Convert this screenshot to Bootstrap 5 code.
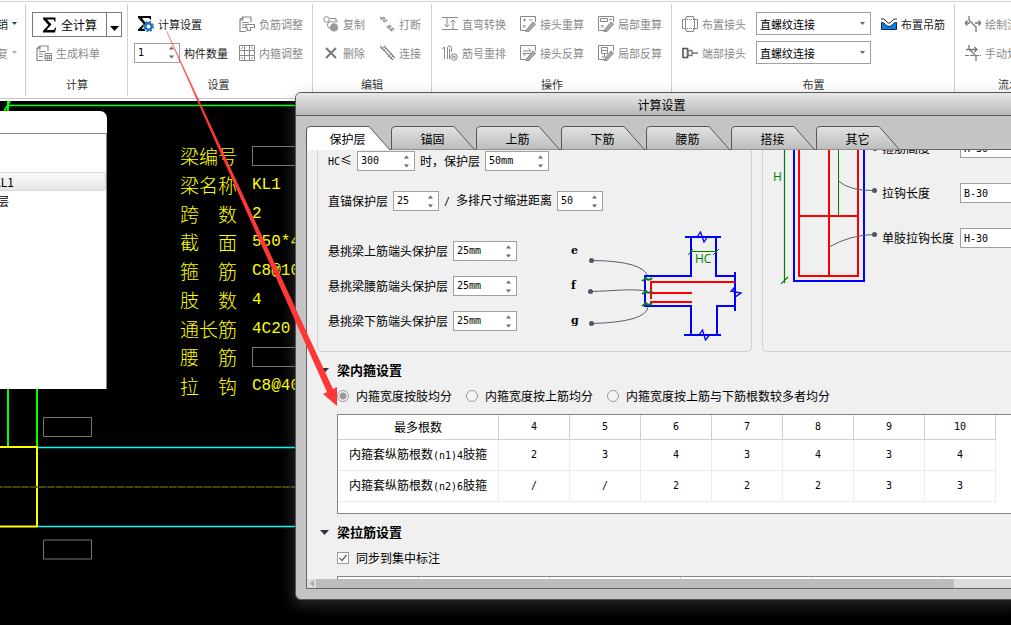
<!DOCTYPE html>
<html lang="zh-CN">
<head>
<meta charset="utf-8">
<meta name="viewport" content="width=device-width, initial-scale=1">
<title>计算设置</title>
<link href="https://cdn.jsdelivr.net/npm/bootstrap@5.3.0/dist/css/bootstrap.min.css" rel="stylesheet">
<script src="https://cdn.jsdelivr.net/npm/bootstrap@5.3.0/dist/js/bootstrap.bundle.min.js"></script>
<style>
  body { background: #000; color: #000; font-family: "Noto Sans CJK SC", sans-serif; font-size: 12px; line-height: 16px; }
  button, input, select { font-family: inherit; }
  svg { display: block; flex: none; }
  .mono { font-family: "DejaVu Sans Mono", monospace; font-size: 10px; }

  /* ribbon */
  .ribbon { background: #fff; border-bottom: 1px solid #c8c8c8; box-shadow: inset 0 1px #fff, inset 0 2px #d0d0d0, 0 2px #fff; font-size: 11px; height: 99px; padding-top: 4px; position: relative; z-index: 1; }
  .ribbon-group { flex: none; border-right: 1px solid #d0d0d0; padding: 5px 9px 0 10px; height: 92px; overflow: hidden; }
  .ribbon-label { color: #333; padding-top: 9px; text-align: center; }
  .ribbon-tight { padding-left: 6px; }
  .ribbon-calc { padding: 5px 5px 0 6px; }
  .ribbon-edit { padding-right: 10px; }
  .ribbon-last { width: 118px; border-right: 0; }
  .cols { display: flex; gap: 14px; }
  .cols-edit { gap: 15px; }
  .cols-set { gap: 11px; }
  .cols-place { gap: 10px; }
  .tool { height: 29px; display: flex; align-items: center; gap: 4px; background: none; border: 0; padding: 0; white-space: nowrap; color: #222; }
  .tool.off { color: #8a8a8a; }
  .tool-cut { width: 26px; padding: 5px 8px 0 0; overflow: hidden; }
  .split-btn { border: 1px solid #7a7a7a; height: 25px; width: 90px; margin: 3px 0 1px; }
  .split-btn button { background: #fff; border: 0; padding: 0; font-size: 12px; }
  .split-btn button + button { border-left: 1px solid #7a7a7a; width: 15px; }
  .pick { appearance: none; width: 115px; height: 23px; margin: 3px 0; padding: 0 18px 0 3px; font-size: 11px; line-height: 16px; border: 1px solid #a0a0a0; border-radius: 0; color: #000; background: #fff url("data:image/svg+xml,%3Csvg xmlns='http://www.w3.org/2000/svg' viewBox='0 0 5 3'%3E%3Cpath d='M0 0h5L2.500 3z' fill='%23666'/%3E%3C/svg%3E") no-repeat right 5px center / 5px 3px; }

  /* spin boxes and plain fields */
  .spin { display: flex; align-items: center; height: 20px; border: 1px solid #a0a0a0; background: #fff; padding-right: 5px; }
  .spin input, .plain { border: 0; padding: 0 0 0 3px; min-width: 0; width: 100%; background: none; font-family: "DejaVu Sans Mono", monospace; font-size: 10px; line-height: 16px; color: #000; outline: 0; }
  .plain { border: 1px solid #a0a0a0; background: #fff; height: 20px; }
  .w-s { width: 46px; } .w-m { width: 58px; } .w-l { width: 64px; }

  /* drawing area */
  .cad { position: relative; min-height: 0; }
  .cad-lines { position: absolute; inset: 0; width: 100%; height: 100%; }
  .cad-props { position: absolute; left: 180px; top: 43px; height: 258px; color: #ff0; font-size: 19px; line-height: 28px; font-weight: 300; }
  .cad-props dt { width: 57px; font-weight: 300; }
  .cad-props dd { margin: 0 0 0 15px; font-family: "Liberation Mono", monospace; font-size: 16px; font-weight: 400; white-space: nowrap; }
  .cad-props .cad-blank { border: 1px solid #777; width: 49px; height: 20px; }
  .side-list { position: absolute; left: 0; top: 12px; width: 107px; height: 278px; background: #fff; border-top-right-radius: 7px; padding-top: 22px; }
  .side-list ul { border-top: 1px solid #7f868e; border-right: 1px solid #7f868e; height: 100%; padding: 38px 0 0; }
  .side-list li { height: 19px; line-height: 17px; border: 1px solid transparent; border-left: 0; white-space: nowrap; display: flex; }
  .side-list li span { width: 14px; display: flex; justify-content: flex-end; flex: none; }
  .side-list li + li span { width: 9px; }
  .side-list .picked { border-color: #d9d9d9; border-radius: 0 3px 3px 0; background: linear-gradient(#fafafa, #e6e6e6); }

  /* dialog */
  .dlg { position: absolute; z-index: 2; left: 295px; top: 92px; right: -17px; bottom: 25px; background: #c4c4c4; border: 1px solid #585858; border-radius: 6px; box-shadow: 0 4px 14px 2px rgba(130,130,130,.3); }
  .dlg-title { height: 23px; border-bottom: 1px solid #585858; border-radius: 5px 5px 0 0; background: linear-gradient(#e8e8e8, #b8b8b8); text-align: center; line-height: 23px; }
  .dlg-main { margin: 10px; min-height: 0; }
  .dlg-tabs { height: 24px; position: relative; z-index: 1; margin-bottom: -1px; }
  .dlg-tab { position: relative; width: 85px; height: 24px; flex: none; background: none; border: 0; padding: 0 2px 0 0; line-height: 25px; color: #000; }
  .dlg-tab svg { position: absolute; left: 0; top: 0; z-index: -1; }
  .pane { background: #f0f0f0; border: 1px solid #666; min-height: 0; overflow: hidden; }
  .pane-body { padding-left: 10px; min-height: 0; overflow: hidden; }
  .boxes { gap: 10px; }
  .box { border: 1px solid #d0d0d0; border-top: 0; border-radius: 0 0 5px 5px; flex: none; white-space: nowrap; }
  .cover { padding: 1px 3px 10px 10px; }
  .cover-labels { width: 17px; font-family: "DejaVu Serif", serif; font-weight: 700; font-size: 11px; line-height: 20px; }
  .cover-fields { width: 243px; }
  .stack { display: grid; gap: 15px; }
  .pair { display: flex; align-items: center; gap: 5px; height: 20px; }
  .pair-line { margin-bottom: 20px; }
  .stirrup { padding-left: 7px; }
  .hooks { display: flex; flex-direction: column; gap: 25px; margin-top: -12px; }
  .hooks label { width: 78px; }
  .sec { height: 20px; margin-top: 8px; padding-left: 3px; font-size: 13px; font-weight: 700; line-height: 20px; gap: 8px; }
  .opts { display: flex; align-items: center; gap: 14px; height: 20px; margin: 6px 0 8px 20px; white-space: nowrap; }
  .opts label { display: flex; align-items: center; gap: 7px; }
  .opts input { appearance: none; width: 12px; height: 12px; margin: 0; border: 1px solid #9a9a9a; flex: none; }
  .opts input[type=radio] { border-radius: 50%; background: #f4f4f4; }
  .opts input[type=radio]:checked { background: radial-gradient(#999 3px, #f4f4f4 4px); }
  .opts input[type=checkbox] { background: #fff url("data:image/svg+xml,%3Csvg xmlns='http://www.w3.org/2000/svg' viewBox='0 0 10 10'%3E%3Cpath d='M1.500 5l2.500 2.500L8.500 2' fill='none' stroke='%23666' stroke-width='1.300'/%3E%3C/svg%3E"); }
  .grid-box { margin-left: 20px; border: 1px solid #7f868e; border-right: 0; background: #fff; height: 100px; overflow: hidden; }
  .grid-box table { table-layout: fixed; width: 658px; text-align: center; border-collapse: separate; border-spacing: 0; }
  .grid-box th { font-weight: 400; height: 25px; border-right: 1px solid #d0d0d0; border-bottom: 1px solid #d0d0d0; padding: 0; }
  .grid-box td { height: 31px; border-right: 1px solid #ececec; border-bottom: 1px solid #ececec; padding: 0; }
  .grid-box .num { font-family: "DejaVu Sans Mono", monospace; font-size: 10px; }
  .grid-box .wide-grid { width: 605px; }
  .c-name { width: 161px; } .c-num { width: 71px; }
  .c-first { width: 81px; } .c-wide { width: 131px; }
  .hbar { height: 9px; background: #dcdcdc; flex: none; }
  .hbar-thumb { background: #bdbdbd; width: 638px; }
  .pointer { position: absolute; left: 0; top: 0; z-index: 3; pointer-events: none; }
</style>
</head>
<body class="vh-100 overflow-hidden position-relative d-flex flex-column">

<svg width="0" height="0" class="position-absolute" aria-hidden="true">
  <defs>
    <linearGradient id="tabFill" x2="0" y2="1"><stop offset="0" stop-color="#e2e2e2"/><stop offset="1" stop-color="#bcbcbc"/></linearGradient>
    <linearGradient id="fade" x1="166" y1="31" x2="205" y2="115" gradientUnits="userSpaceOnUse"><stop offset="0" stop-color="#ff3737" stop-opacity=".6"/><stop offset="1" stop-color="#ff3737"/></linearGradient>
    <symbol id="tab" viewBox="0 0 85 24"><path d="M.5 23.500V4Q.5.5 4 .5H63L83.500 23.500" fill="url(#tabFill)" stroke="#585858"/></symbol>
    <symbol id="tabOn" viewBox="0 0 85 24"><path d="M.5 24V4Q.5.5 4 .5H63L84 24" fill="#fff" stroke="#585858"/></symbol>
    <symbol id="updown" viewBox="0 0 5 13"><path d="M0 3.500L2.500.5 5 3.500zM0 9.500L2.500 12.500 5 9.500z" fill="#666"/></symbol>
    <symbol id="pen" viewBox="0 0 16 16"><path d="M6 14.500L13 6l2.500 2L9 15.500l-3 .5z" fill="#aaa" stroke="#777" stroke-width=".8"/></symbol>
    <symbol id="sheet" viewBox="0 0 16 16"><path d="M7 15.500H1V3.500L4 1h8v5M4 1v3H1M3 6.500h7M3 9h4M3 11.500h4" fill="none" stroke="currentColor" stroke-width="1.200"/></symbol>
  </defs>
</svg>

<header class="ribbon d-flex">
  <section class="ribbon-group tool-cut">
    <button class="tool w-100 justify-content-end"><span>撤销</span><svg width="5" height="3"><path d="M0 0h5L2.500 3z" fill="#1d3f74"/></svg></button>
    <button class="tool off w-100 justify-content-end"><span>恢复</span><svg width="5" height="3"><path d="M0 0h5L2.500 3z" fill="#aaa"/></svg></button>
  </section>

  <section class="ribbon-group ribbon-calc">
    <div class="split-btn d-flex">
      <button class="d-flex align-items-center justify-content-center gap-1 flex-fill"><svg width="15" height="16" viewBox="0 0 15 16"><path d="M1 .5h12.500v4h-1l-.8-2H5l4.500 5L4.500 13h7.500l1.200-2.500h1L13 15.500H1v-1.500l5.300-6L1 2z"/></svg><span>全计算</span></button>
      <button aria-label="更多" class="d-flex align-items-center justify-content-center pt-2"><svg width="9" height="5"><path d="M0 0h9L4.500 5z"/></svg></button>
    </div>
    <button class="tool off ms-1"><svg width="16" height="16" viewBox="0 0 16 16"><use href="#sheet"/><path d="M9 8.500h6.500v7H9zM9 10.500h6.500M11.200 10.500v5M13.300 10.500v5M9 13h6.500" fill="none" stroke="currentColor"/></svg>生成料单</button>
    <div class="ribbon-label">计算</div>
  </section>

  <section class="ribbon-group ribbon-tight">
    <div class="cols cols-set">
      <div>
        <button class="tool ms-1"><svg width="16" height="16" viewBox="0 0 16 16"><path d="M0 0h13v3.500h-1L11 2H4l4 5.500L3.500 13H7v2H0v-1.500L5.500 8 0 1.800z"/><circle cx="10.500" cy="10.500" r="3.200" fill="#fff" stroke="#1d6fc0" stroke-width="2.400"/><circle cx="10.500" cy="10.500" r="4.800" fill="none" stroke="#1d6fc0" stroke-width="1.500" stroke-dasharray="2 1.770"/></svg>计算设置</button>
        <div class="tool"><div class="spin w-s"><input id="qty" value="1"><svg width="5" height="13"><use href="#updown"/></svg></div><label for="qty">构件数量</label></div>
      </div>
      <div>
        <button class="tool off"><svg width="16" height="16" viewBox="0 0 16 16"><use href="#sheet"/><path d="M7 8.500h8.500v3h-4v3H8v-3H7z" fill="#fff" stroke="currentColor" stroke-width="1.200"/></svg>负筋调整</button>
        <button class="tool off"><svg width="16" height="16" viewBox="0 0 16 16"><path d="M.5.500h15v15H.5zM5.500.5v15M10.500.5v15M.5 5.500h15M.5 10.500h15" fill="none" stroke="currentColor"/><path d="M2 4l2-2M12 2l2 2M2 12l2 2M12 14l2-2" stroke="currentColor"/></svg>内箍调整</button>
      </div>
    </div>
    <div class="ribbon-label">设置</div>
  </section>

  <section class="ribbon-group ribbon-edit">
    <div class="cols cols-edit">
      <div>
        <button class="tool off"><svg width="16" height="16" viewBox="0 0 16 16"><circle cx="3.500" cy="3.500" r="2.800" fill="none" stroke="currentColor"/><path d="M7 2.500h6V6M11 4.500l2 2 2-2" fill="none" stroke="currentColor"/><circle cx="8" cy="9" r="3.500" fill="#fff" stroke="currentColor"/><circle cx="11" cy="11.500" r="4" fill="#999"/></svg>复制</button>
        <button class="tool off"><svg width="16" height="16" viewBox="0 0 16 16"><path d="M3 3l10 10M13 3L3 13" stroke="#777" stroke-width="2"/></svg>删除</button>
      </div>
      <div>
        <button class="tool off"><svg width="15" height="16" viewBox="0 0 15 16"><path d="M0 1l6 6M3 1l4 4M7 10l6 6M9 9l5 5" stroke="currentColor" stroke-width="1.500" stroke-dasharray="3 1"/><path d="M1 4l3-3M4 6l2-2M8 13l3-3M11 14l2-2" stroke="currentColor"/></svg>打断</button>
        <button class="tool off"><svg width="15" height="16" viewBox="0 0 15 16"><path d="M0 1l13 14M4 1l11 12" stroke="currentColor" stroke-width="1.300"/><path d="M1 4l4-3M3 6l3-3M8 12l3-3M10 14l3-3" stroke="currentColor"/></svg>连接</button>
      </div>
    </div>
    <div class="ribbon-label">编辑</div>
  </section>

  <section class="ribbon-group">
    <div class="cols">
      <div>
        <button class="tool off"><svg width="16" height="16" viewBox="0 0 16 16"><path d="M0 1.500h16M0 13.500h16M5 2v9M2.500 8.500L5 11l2.500-2.500M11 13V4M8.500 6.500L11 4l2.500 2.500" fill="none" stroke="currentColor"/></svg>直弯转换</button>
        <button class="tool off"><svg width="16" height="16" viewBox="0 0 16 16"><path d="M0 4l2.500-2v12M5.500 14V3q0-2 2-2t2 2v4M7.500 14V4" fill="none" stroke="currentColor"/><circle cx="12" cy="12" r="3.300" fill="none" stroke="currentColor"/><path d="M11 13.500v-3l2 3v-3" fill="none" stroke="currentColor"/></svg>筋号重排</button>
      </div>
      <div>
        <button class="tool off"><svg width="16" height="16" viewBox="0 0 16 16"><path d="M6 14.500H.5V.5h15V6M3 4h3M4.500 2.500v3M9 4h3M3 9l2.500 2.500M5.500 9L3 11.500" fill="none" stroke="currentColor"/><use href="#pen"/></svg>接头重算</button>
        <button class="tool off"><svg width="16" height="16" viewBox="0 0 16 16"><path d="M6 14.500H.5V.5h15V6M3 6h8L8.500 3.500M11 8.500H3L5.500 11" fill="none" stroke="currentColor"/><use href="#pen"/></svg>接头反算</button>
      </div>
      <div>
        <button class="tool off"><svg width="16" height="16" viewBox="0 0 16 16"><path d="M6 14.500H.5V.5h15V6M2.500 2.500h7v3h-7zM3 9l2.500 2.500M5.500 9L3 11.500M11 3.500h3" fill="none" stroke="currentColor"/><use href="#pen"/></svg>局部重算</button>
        <button class="tool off"><svg width="16" height="16" viewBox="0 0 16 16"><path d="M6 14.500H.5V.5h15V6M3.500 2.500h6v3h-6zM3.500 5.500v3h6v-3M6.500 8.500V12M3.500 12h4" fill="none" stroke="currentColor"/><use href="#pen"/></svg>局部反算</button>
      </div>
    </div>
    <div class="ribbon-label">操作</div>
  </section>

  <section class="ribbon-group">
    <div class="cols cols-place">
      <div>
        <button class="tool off"><svg width="16" height="16" viewBox="0 0 16 16"><path d="M4.500.5h7v2h1v11h-1v2h-7v-2h-1v-11h1zM3.500 3.500h-3v9h3M12.500 3.500h3v9h-3" fill="none" stroke="currentColor"/><path d="M5 3.500h7M5 12.500h7" stroke="currentColor" stroke-dasharray="1 1"/></svg>布置接头</button>
        <button class="tool off"><svg width="16" height="16" viewBox="0 0 16 16"><path d="M1 3.500h4.500v9H1z" fill="none" stroke="#555" stroke-width="1.600"/><path d="M6 5.500h4v5H6zM10 8h6" fill="none" stroke="#777" stroke-width="1.400"/></svg>端部接头</button>
      </div>
      <div class="d-flex flex-column">
        <select class="pick" aria-label="布置接头"><option>直螺纹连接</option></select>
        <select class="pick" aria-label="端部接头"><option>直螺纹连接</option></select>
      </div>
      <button class="tool"><svg width="16" height="16" viewBox="0 0 16 16"><path d="M.5 6.500q2.500 0 4 2t3.500 2 3.500-2 4-2v7H.5z" fill="#0a7fee" stroke="#123"/><path d="M0 3h3l4 4h2l4-4h3" fill="none" stroke="#333"/></svg>布置吊筋</button>
    </div>
    <div class="ribbon-label">布置</div>
  </section>

  <section class="ribbon-group ribbon-last">
    <button class="tool off"><svg width="16" height="16" viewBox="0 0 16 16"><path d="M4 0v4l7 7v5M0 7h5M2.500 4.500L0 7l2.500 2.500M10 7h6M13.500 4.500L16 7l-2.500 2.500" fill="none" stroke="#777" stroke-width="1.300"/></svg>绘制流水段</button>
    <button class="tool off"><svg width="16" height="16" viewBox="0 0 16 16"><path d="M4 0v4l7 7v5M1 4.500h11M9.500 2l2.500 2.500L9.500 7" fill="none" stroke="#777" stroke-width="1.300"/><path d="M0 10.500h16" stroke="#777" stroke-dasharray="4 1"/></svg>手动划分</button>
    <div class="ribbon-label">流水段</div>
  </section>
</header>

<main class="cad flex-fill">
  <svg class="cad-lines" aria-hidden="true">
    <g transform="translate(0,-99)" fill="none">
      <path d="M8 101V447M4 112L10 101M37 389V447" stroke="#0f0" stroke-width="2"/>
      <line x1="7" y1="105.500" x2="100%" y2="105.500" stroke="#0f0" stroke-width="1.500"/>
      <path d="M0 447H37V526.500H0" stroke="#ff0" stroke-width="2"/>
      <line x1="38" y1="447.500" x2="100%" y2="447.500" stroke="#0ff" stroke-width="1.500"/>
      <line x1="38" y1="526.500" x2="100%" y2="526.500" stroke="#0ff" stroke-width="1.500"/>
      <line x1="-5" y1="487" x2="100%" y2="487" stroke="#454500" stroke-width="2" stroke-dasharray="7.700 1"/>
      <path d="M43.500 417.500h48v19h-48zM43.500 540h48v19h-48z" stroke="#777"/>
    </g>
  </svg>

  <dl class="cad-props d-flex flex-column justify-content-between m-0">
    <div class="d-flex align-items-center"><dt class="d-flex justify-content-between"><span>梁</span><span>编</span><span>号</span></dt><dd class="cad-blank"></dd></div>
    <div class="d-flex"><dt class="d-flex justify-content-between"><span>梁</span><span>名</span><span>称</span></dt><dd>KL1</dd></div>
    <div class="d-flex"><dt class="d-flex justify-content-between"><span>跨</span><span>数</span></dt><dd>2</dd></div>
    <div class="d-flex"><dt class="d-flex justify-content-between"><span>截</span><span>面</span></dt><dd>550*400</dd></div>
    <div class="d-flex"><dt class="d-flex justify-content-between"><span>箍</span><span>筋</span></dt><dd>C8@100</dd></div>
    <div class="d-flex"><dt class="d-flex justify-content-between"><span>肢</span><span>数</span></dt><dd>4</dd></div>
    <div class="d-flex"><dt class="d-flex justify-content-between"><span>通</span><span>长</span><span>筋</span></dt><dd>4C20</dd></div>
    <div class="d-flex align-items-center"><dt class="d-flex justify-content-between"><span>腰</span><span>筋</span></dt><dd class="cad-blank"></dd></div>
    <div class="d-flex"><dt class="d-flex justify-content-between"><span>拉</span><span>钩</span></dt><dd>C8@400</dd></div>
  </dl>

  <aside class="side-list">
    <ul class="list-unstyled m-0">
      <li class="picked"><span>KL1</span></li>
      <li><span>层</span></li>
    </ul>
  </aside>
</main>

<section class="dlg d-flex flex-column" role="dialog" aria-labelledby="dlgTitle">
  <div class="dlg-title" id="dlgTitle">计算设置</div>
  <div class="dlg-main flex-fill d-flex flex-column">
    <div class="dlg-tabs d-flex" role="tablist">
      <button class="dlg-tab" role="tab" aria-selected="true"><svg width="85" height="24"><use href="#tabOn"/></svg>保护层</button>
      <button class="dlg-tab" role="tab"><svg width="85" height="24"><use href="#tab"/></svg>锚固</button>
      <button class="dlg-tab" role="tab"><svg width="85" height="24"><use href="#tab"/></svg>上筋</button>
      <button class="dlg-tab" role="tab"><svg width="85" height="24"><use href="#tab"/></svg>下筋</button>
      <button class="dlg-tab" role="tab"><svg width="85" height="24"><use href="#tab"/></svg>腰筋</button>
      <button class="dlg-tab" role="tab"><svg width="85" height="24"><use href="#tab"/></svg>搭接</button>
      <button class="dlg-tab" role="tab"><svg width="85" height="24"><use href="#tab"/></svg>其它</button>
    </div>

    <div class="pane flex-fill d-flex flex-column">
      <div class="pane-body flex-fill">
        <div class="boxes d-flex">
          <div class="box cover">
            <div class="pair pair-line"><label for="hc"><span class="mono">HC</span>≤</label><div class="spin w-m"><input id="hc" value="300"><svg width="5" height="13"><use href="#updown"/></svg></div><label for="hcCover">时，保护层</label><div class="spin w-l"><input id="hcCover" value="50mm"><svg width="5" height="13"><use href="#updown"/></svg></div></div>
            <div class="pair pair-line"><label for="anchor">直锚保护层</label><div class="spin w-s"><input id="anchor" value="25"><svg width="5" height="13"><use href="#updown"/></svg></div><label for="indent"><span class="mono">/ </span>多排尺寸缩进距离</label><div class="spin w-s"><input id="indent" value="50"><svg width="5" height="13"><use href="#updown"/></svg></div></div>
            <div class="d-flex align-items-center">
              <div class="cover-fields stack">
                <div class="pair"><label for="top">悬挑梁上筋端头保护层</label><div class="spin w-l"><input id="top" value="25mm"><svg width="5" height="13"><use href="#updown"/></svg></div></div>
                <div class="pair"><label for="mid">悬挑梁腰筋端头保护层</label><div class="spin w-l"><input id="mid" value="25mm"><svg width="5" height="13"><use href="#updown"/></svg></div></div>
                <div class="pair"><label for="bot">悬挑梁下筋端头保护层</label><div class="spin w-l"><input id="bot" value="25mm"><svg width="5" height="13"><use href="#updown"/></svg></div></div>
              </div>
              <div class="cover-labels stack"><span>e</span><span>f</span><span>g</span></div>
              <svg width="160" height="110" viewBox="588 231 160 110" fill="none">
                <g stroke="#5a5f6b"><path d="M592 260.500Q644 261 648 277M591 291.500C615 291 635 288 647 291.500M592 323.500Q646 322 648 307"/></g>
                <g fill="#4f5563"><circle cx="591.500" cy="260.500" r="2.500"/><circle cx="590.500" cy="291.500" r="2.500"/><circle cx="591.500" cy="323.500" r="2.500"/></g>
                <g stroke="#00f" stroke-width="2"><path d="M685 237h36M691 237v39h-46v30h46v29M684 335h37M716 237v39h19M717 335v-29h18M735 272v39"/></g>
                <g stroke="#00f" stroke-width="1.300"><path d="M697 237l3.500-5 3.500 10 4-6M699 335l3.500-5 3 10 4-5M735 287l-4 4 10 2-6 4-1-9"/></g>
                <g stroke="#f00" stroke-width="2"><path d="M651 299V282H735M651 293h41M650 302h42"/></g>
                <path d="M691 251.500h25M688 255l5-6M713 255l6-6" stroke="#008000"/>
                <path d="M642 281l5-3M645 277q3 5 7 1M642 294l5-3M645 290q3 5 7 1M642 306l5-3M645 302q3 5 7 1" stroke="#0a7a20" stroke-width="2"/>
                <text x="695" y="263" font-family="Open Sans, sans-serif" font-size="12" fill="#008000">HC</text>
              </svg>
            </div>
          </div>
          <div class="box stirrup d-flex flex-fill">
            <svg width="112" height="134" viewBox="770 150 112 134" fill="none">
              <path d="M784.500 150V283M781 284l7-7" stroke="#008000" stroke-width="1.200"/>
              <path d="M794 150V281H864V150" stroke="#00f" stroke-width="2"/>
              <path d="M799 150V276H858V150M829 150V276M799 216H858" stroke="#f00" stroke-width="2"/>
              <path d="M838.500 150V216" stroke="#008000"/>
              <path d="M838.500 181Q850 191 874 190.500M829 247Q850 235 874 234.500" stroke="#5a5f6b"/>
              <circle cx="874.500" cy="190.500" r="2.500" fill="#4f5563"/><circle cx="874.500" cy="234.500" r="2.500" fill="#4f5563"/><circle cx="875" cy="148.500" r="2.500" fill="#4f5563"/>
              <text x="773" y="181" font-family="Open Sans, sans-serif" font-size="12" fill="#008000">H</text>
            </svg>
            <div class="hooks">
              <div class="d-flex align-items-center"><label for="hk1">箍筋高度</label><input id="hk1" class="plain w-l" value="H-30"></div>
              <div class="d-flex align-items-center"><label for="hk2">拉钩长度</label><input id="hk2" class="plain w-l" value="B-30"></div>
              <div class="d-flex align-items-center"><label for="hk3">单肢拉钩长度</label><input id="hk3" class="plain w-l" value="H-30"></div>
            </div>
          </div>
        </div>

        <h2 class="sec d-flex align-items-center mb-0"><svg width="9" height="5"><path d="M0 0h9L4.500 5z" fill="#2b3440"/></svg>梁内箍设置</h2>
        <div class="opts">
          <label><input type="radio" name="w" checked>内箍宽度按肢均分</label>
          <label><input type="radio" name="w">内箍宽度按上筋均分</label>
          <label><input type="radio" name="w">内箍宽度按上筋与下筋根数较多者均分</label>
        </div>
        <div class="grid-box">
          <table>
            <colgroup><col class="c-name"><col span="7" class="c-num"></colgroup>
            <thead><tr><th>最多根数</th><th class="num">4</th><th class="num">5</th><th class="num">6</th><th class="num">7</th><th class="num">8</th><th class="num">9</th><th class="num">10</th></tr></thead>
            <tbody>
              <tr><td>内箍套纵筋根数<span class="mono">(n1)4</span>肢箍</td><td class="num">2</td><td class="num">3</td><td class="num">4</td><td class="num">3</td><td class="num">4</td><td class="num">3</td><td class="num">4</td></tr>
              <tr><td>内箍套纵筋根数<span class="mono">(n2)6</span>肢箍</td><td class="num">/</td><td class="num">/</td><td class="num">2</td><td class="num">2</td><td class="num">2</td><td class="num">3</td><td class="num">3</td></tr>
            </tbody>
          </table>
        </div>

        <h2 class="sec d-flex align-items-center mb-0"><svg width="9" height="5"><path d="M0 0h9L4.500 5z" fill="#2b3440"/></svg>梁拉筋设置</h2>
        <div class="opts">
          <label><input type="checkbox" checked>同步到集中标注</label>
        </div>
        <div class="grid-box">
          <table class="wide-grid">
            <colgroup><col class="c-first"><col span="4" class="c-wide"></colgroup>
            <thead><tr><th></th><th></th><th></th><th></th><th></th></tr></thead>
          </table>
        </div>
      </div>
      <div class="hbar d-flex align-items-center"><svg width="9" height="9"><path d="M7 1v7L3 4.500z" fill="#aaa"/></svg><div class="hbar-thumb h-100"></div></div>
    </div>
  </div>
</section>

<svg class="pointer" width="345" height="410" aria-hidden="true"><path d="M166 31h1L333 389l4-2v19L323 394l4-2z" fill="url(#fade)"/></svg>
</body>
</html>
